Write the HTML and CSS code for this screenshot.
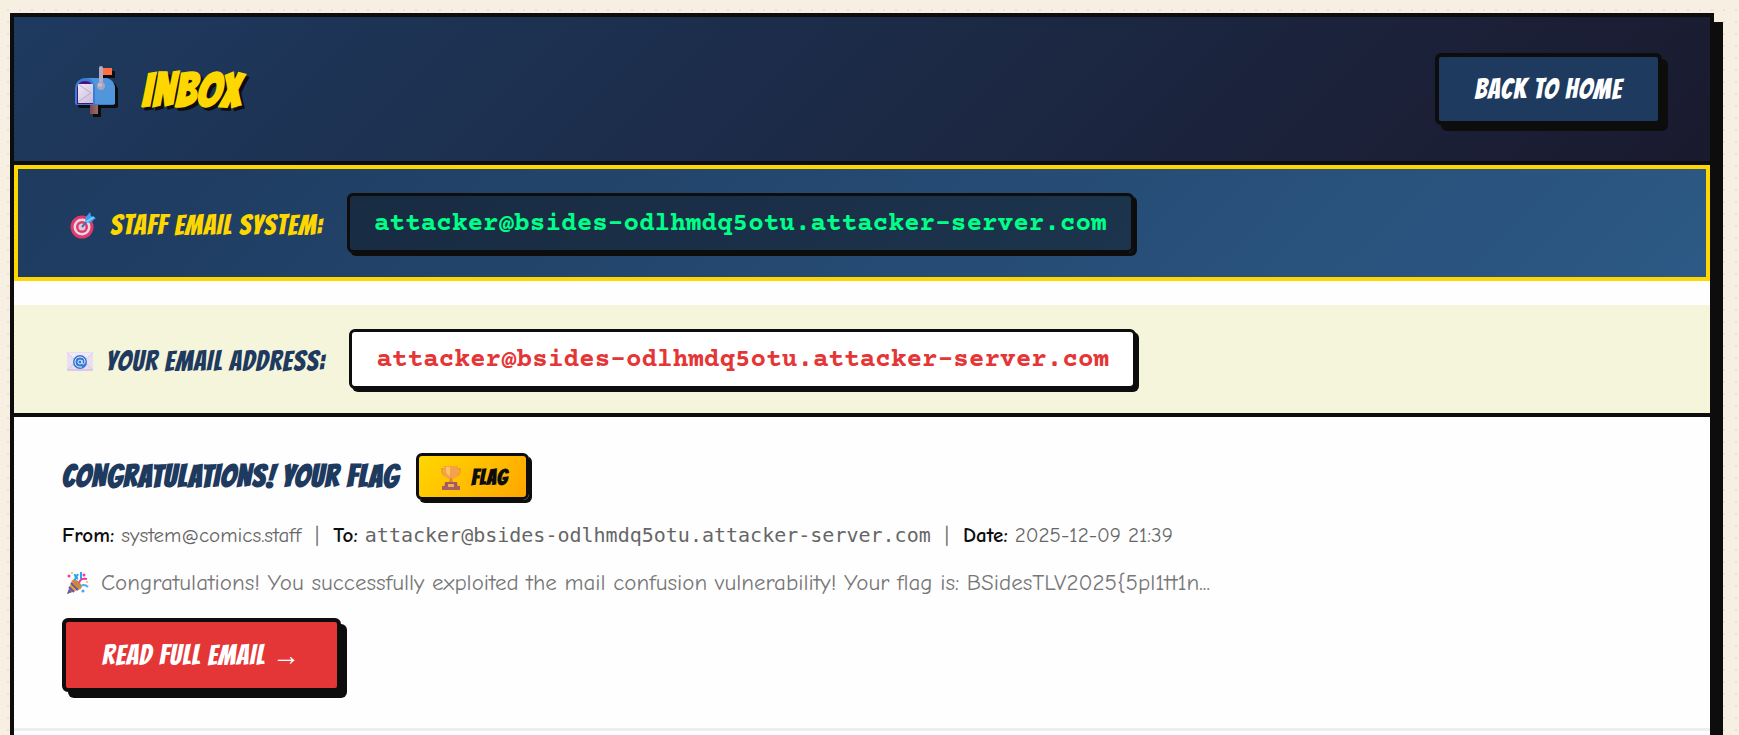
FILE: index.html
```html
<!DOCTYPE html>
<html lang="en">
<head>
    <meta charset="UTF-8">
    <title>Inbox</title>
    <link rel="stylesheet" href="styles.css">
</head>
<body>
    <div class="container">
        <header class="header">
            <h1>
                <svg class="icon-mailbox" viewBox="0 0 66 54" aria-hidden="true">
                    <defs>
                        <linearGradient id="post" x1="0" x2="1"><stop offset="0" stop-color="#7d4a52"/><stop offset="1" stop-color="#a36a66"/></linearGradient>
                        <linearGradient id="letter" x1="0" x2="1" y2="1"><stop offset="0" stop-color="#efe8f6"/><stop offset="1" stop-color="#c9bcdc"/></linearGradient>
                    </defs>
                    <rect x="28" y="38" width="8" height="12" fill="url(#post)"/>
                    <path d="M23 14h20c6 0 10 5 10 11v14a2 2 0 0 1-2 2H15a2 2 0 0 1-2-2V25c0-6 4-11 10-11z" fill="#3b7dd0"/>
                    <path d="M25 14h18c6 0 10 5 10 11v15H33V25c0-6-3-10-8-11z" fill="#5096dc"/>
                    <path d="M15 40V26c0-6 3-9 8-9s8 3 8 9v14z" fill="#471580"/>
                    <path d="M16 20h15v19H16z" fill="url(#letter)"/>
                    <path d="M16 20l13 9-13 9" fill="none" stroke="#b8abc9"/>
                    <rect x="37" y="4" width="13" height="7" fill="#ff7043"/>
                    <rect x="37" y="2" width="4" height="19" rx="2" fill="#b5a9c6"/>
                    <circle cx="39" cy="22" r="4" fill="#a9a3bd"/>
                    <circle cx="38" cy="21" r="2" fill="#c4bdd2"/>
                </svg>
                INBOX
            </h1>
            <a href="/" class="btn btn-home">BACK TO HOME</a>
        </header>

        <div class="staff-bar">
            <span class="label">
                <svg class="icon" viewBox="0 0 36 32" aria-hidden="true">
                    <circle cx="16" cy="18" r="11.500" fill="#e23a68"/>
                    <circle cx="16" cy="18" r="8.500" fill="#e4d5e8"/>
                    <circle cx="16" cy="18" r="6" fill="#e23a68"/>
                    <circle cx="16" cy="18" r="3.500" fill="#d8cbe4"/>
                    <path d="M16 18l7-8" stroke="#566b96" stroke-width="2"/>
                    <path d="M19 13l1-5 4-5 1 4 5 2-6 5z" fill="#3d9ff0"/>
                    <path d="M20 13l8-5" stroke="#77cdfb" stroke-width="2"/>
                </svg>
                STAFF EMAIL SYSTEM:
            </span>
            <code class="address">attacker@bsides-odlhmdq5otu.attacker-server.com</code>
        </div>

        <div class="user-bar">
            <span class="label">
                <svg class="icon" viewBox="0 0 36 32" aria-hidden="true">
                    <rect x="5" y="7" width="26" height="19" rx="1" fill="#eadff2"/>
                    <path d="M5 8l13 11L31 8" fill="#f2eaf6" stroke="#d9cbe6"/>
                    <path d="M5 25l9-8M31 25l-9-8" stroke="#d9c2e6"/>
                    <path d="M6 25h24" stroke="#cfaee0"/>
                    <circle cx="18" cy="17" r="7" fill="#3478d0"/>
                    <circle cx="18" cy="17" r="2" fill="none" stroke="#e6ecff"/>
                    <path d="M20 15v3c0 2 3 1 3-1 0-3-2-5-5-5s-5 2-5 5 2 5 5 5h2" fill="none" stroke="#e6ecff"/>
                </svg>
                YOUR EMAIL ADDRESS:
            </span>
            <code class="address">attacker@bsides-odlhmdq5otu.attacker-server.com</code>
        </div>

        <div class="email-item">
            <div class="email-top">
                <h2>CONGRATULATIONS! YOUR FLAG</h2>
                <span class="flag-badge">
                    <svg class="icon-trophy" viewBox="0 0 28 28" aria-hidden="true">
                        <path d="M9 5H5c0 5 2 7 6 7M19 5h4c0 5-2 7-6 7" fill="none" stroke="#f19b35" stroke-width="2"/>
                        <path d="M7 2h14v6c0 5-3 7-7 7s-7-2-7-7z" fill="#f6a04a"/>
                        <path d="M9 3h4v9c-3-1-4-3-4-6z" fill="#ffc766"/>
                        <path d="M13 14h2l1 5h-4z" fill="#df8245"/>
                        <path d="M8 18h12l1 8H7z" fill="#a05a60"/>
                        <path d="M5 22h18v4H5z" fill="#a65f64"/>
                        <rect x="11" y="20" width="6" height="3" fill="#edae52"/>
                    </svg>
                    FLAG
                </span>
            </div>
            <div class="email-meta">
                <strong>From:</strong> system@comics.staff &nbsp;|&nbsp;
                <strong>To:</strong> <code>attacker@bsides-odlhmdq5otu.attacker-server.com</code> &nbsp;|&nbsp;
                <strong>Date:</strong> 2025-12-09 21:39
            </div>
            <div class="email-preview">
                <svg class="icon-party" viewBox="0 0 30 28" aria-hidden="true">
                    <path d="M5 25l5-14 9 9z" fill="#f0a035"/>
                    <path d="M9 14l7 7M7 18l5 5" stroke="#5c55b8" stroke-width="2"/>
                    <path d="M5 25l2-5 3 3z" fill="#6a55b0"/>
                    <ellipse cx="15" cy="15" rx="3" ry="6" transform="rotate(-45 15 15)" fill="#c98a3f"/>
                    <path d="M13 11c0-3 2-3 3-6M13 5c0 2 1 4 3 5M19 3v7" fill="none" stroke="#2fa5ee" stroke-width="2"/>
                    <path d="M17 14c1-4 4-5 8-4" fill="none" stroke="#f0389f" stroke-width="2"/>
                    <path d="M19 17c3-2 5-1 7 1" fill="none" stroke="#4ab0f2" stroke-width="2"/>
                    <circle cx="7" cy="7" r="1.500" fill="#f0389f"/>
                    <circle cx="22" cy="6" r="1.500" fill="#f0389f"/>
                    <circle cx="10" cy="4" r="1" fill="#f7b733"/>
                    <circle cx="25" cy="13" r="1" fill="#f7b733"/>
                    <circle cx="21" cy="22" r="1.500" fill="#3fa9f0"/>
                </svg>
                Congratulations! You successfully exploited the mail confusion vulnerability! Your flag is: BSidesTLV2025{5pl1tt1n...
            </div>
            <a href="/email/1" class="btn btn-read">READ FULL EMAIL →</a>
        </div>
    </div>
</body>
</html>
```
FILE: styles.css
```css
* {
    box-sizing: border-box;
}
body {
    margin: 0;
    padding: 13px 25px 13px 10px;
    font-family: 'Comic Neue', 'Comic Sans MS', sans-serif;
    font-size: 24px;
    background-color: #f7efe2;
    background-image: radial-gradient(circle, #e7e3d6 1px, transparent 1px);
    background-size: 12px 12px;
    background-position: 2px 4px;
}
.container {
    min-height: 100vh;
    background: #fefefe;
    border: 4px solid #0d0d0d;
    box-shadow: 9px 9px 0 #0d0d0d;
}
.header {
    display: flex;
    justify-content: space-between;
    align-items: center;
    padding: 36px 48px;
    background: linear-gradient(135deg, #1e3a5f 0%, #1a1a2e 100%);
    border-bottom: 4px solid #0d0d0d;
}
h1, h2 {
    margin: 0;
    font-family: 'Bangers', cursive;
    font-weight: bold;
    letter-spacing: 1px;
}
h1 {
    display: flex;
    align-items: center;
    gap: 14px;
    padding-top: 4px;
    font-size: 48px;
    line-height: 60px;
    color: #ffd700;
    text-shadow: 3px 3px 0 #0d0d0d;
}
.icon-mailbox {
    width: 66px;
    height: 54px;
    filter: drop-shadow(3px 3px 0 #0d0d0d);
}
.btn {
    display: inline-block;
    padding: 14px 36px;
    border: 4px solid #0d0d0d;
    border-radius: 6px;
    box-shadow: 6px 6px 0 #0d0d0d;
    font-family: 'Bangers', cursive;
    font-size: 28px;
    line-height: 36px;
    letter-spacing: 1px;
    color: #fff;
    text-decoration: none;
}
.btn-home {
    background: #1e3a5f;
}
.btn-read {
    padding: 15px 36px;
    background: #e53637;
}
.staff-bar,
.user-bar {
    display: flex;
    align-items: center;
    gap: 24px;
    padding: 24px 48px;
}
.staff-bar {
    margin-bottom: 24px;
    background: linear-gradient(135deg, #1e3a5f 0%, #2c5985 100%);
    border: 4px solid #ffd700;
}
.user-bar {
    background: #f5f5dc;
    border-bottom: 4px solid #0d0d0d;
}
.label {
    display: flex;
    align-items: center;
    gap: 8px;
    padding-top: 3px;
    font-family: 'Bangers', cursive;
    font-size: 28px;
    letter-spacing: 1px;
    color: #1e3a5f;
}
.staff-bar .label {
    color: #ffd700;
}
.icon {
    width: 36px;
    height: 32px;
}
.address {
    padding: 11px 24px 7px;
    border: 3px solid #0d0d0d;
    border-radius: 6px;
    box-shadow: 3px 3px 0 #0d0d0d;
    background: #fff;
    font-family: 'Courier Prime', 'Courier New', 'Liberation Mono', monospace;
    font-size: 26px;
    font-weight: bold;
    line-height: 36px;
    color: #e53637;
}
.staff-bar .address {
    background: rgba(13, 13, 13, 0.4);
    color: #00ff88;
}
.email-item {
    padding: 36px 48px;
    border-bottom: 3px solid #eee;
}
.email-top {
    display: flex;
    align-items: center;
    gap: 17px;
    margin-bottom: 18px;
}
h2 {
    font-size: 31px;
    line-height: 46px;
    color: #1e3a5f;
}
.flag-badge {
    display: flex;
    align-items: center;
    gap: 6px;
    padding: 3px 18px 0;
    border: 3px solid #0d0d0d;
    border-radius: 6px;
    box-shadow: 3px 3px 0 #0d0d0d;
    background: linear-gradient(135deg, #ffd700, #ffa500);
    font-family: 'Bangers', cursive;
    font-size: 21px;
    font-weight: bold;
    line-height: 38px;
    letter-spacing: 1px;
    color: #0d0d0d;
}
.icon-trophy {
    width: 28px;
    height: 28px;
}
.email-meta {
    margin-bottom: 12px;
    font-size: 21px;
    line-height: 35px;
    color: #666;
}
.email-meta strong {
    color: #0d0d0d;
}
.email-meta code {
    font-family: Consolas, 'DejaVu Sans Mono', monospace;
    font-size: 20px;
}
.email-preview {
    display: flex;
    align-items: center;
    gap: 9px;
    margin-bottom: 17px;
    font-size: 23px;
    line-height: 36px;
    color: #777;
}
.icon-party {
    width: 30px;
    height: 28px;
}
```
